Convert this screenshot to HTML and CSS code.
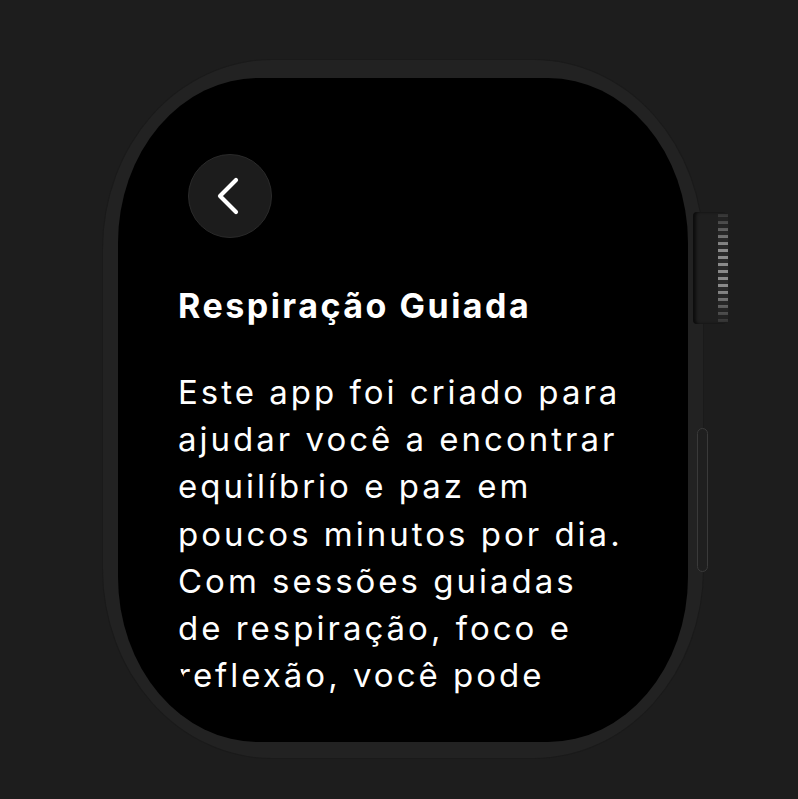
FILE: index.html
```html
<!DOCTYPE html>
<html lang="pt">
<head>
<meta charset="utf-8">
<title>Respiração Guiada</title>
<link rel="stylesheet" href="styles.css">
</head>
<body>
  <div class="watch">
    <div class="case">
      <div class="screen">
        <div class="scroll">
          <button class="back" aria-label="Voltar">
            <svg width="26" height="40" viewBox="0 0 26 40" aria-hidden="true">
              <path d="M21 4 L5 20 L21 36" fill="none" stroke="#fff" stroke-width="4.2" stroke-linecap="round" stroke-linejoin="round"/>
            </svg>
          </button>
          <h1 class="title">Respiração Guiada</h1>
          <p class="body">Este app foi criado para<br>ajudar você a encontrar<br>equilíbrio e paz em<br>poucos minutos por dia.<br>Com sessões guiadas<br>de respiração, foco e<br>reflexão, você pode<br>seguir mais leve e<br>tranquilo em seu dia.</p>
        </div>
      </div>
      <div class="crown"><div class="grooves"></div></div>
      <div class="side-button"></div>
    </div>
  </div>
</body>
</html>
```

FILE: styles.css
```css
html, body {
  margin: 0;
  padding: 0;
  background: #1d1d1d;
}
body {
  width: 798px;
  height: 799px;
  overflow: hidden;
  font-family: Inter, "Noto Sans", sans-serif;
  color: #fff;
}
.watch {
  padding: 59px 0 0 102px;
}
.case {
  position: relative;
  box-sizing: border-box;
  width: 602px;
  height: 700px;
  padding: 18px 15px 16px 15px;
  background: #222222;
  border: 1px solid #1a1a1a;
  border-radius: 170px / 190px;
}
.screen {
  box-sizing: border-box;
  height: 100%;
  background: #000;
  border-radius: 140px / 165px;
  padding: 0 0 34px 60px;
  display: flex;
  flex-direction: column;
}
.scroll {
  flex: 1;
  overflow: hidden;
  border-bottom-left-radius: 80px 50px;
}
.back {
  display: flex;
  align-items: center;
  justify-content: center;
  width: 84px;
  height: 84px;
  margin: 76px 0 0 10px;
  padding: 0 5px 0 0;
  border-radius: 50%;
  background: #1c1c1c;
  border: 1px solid #2b2b2b;
  box-sizing: border-box;
}
.title {
  margin: 50px 0 0 0;
  font-size: 34px;
  line-height: 36px;
  font-weight: 700;
  letter-spacing: 2.5px;
}
.body {
  margin: 45px 0 0 0;
  width: 500px;
  font-size: 33px;
  line-height: 47.2px;
  font-weight: 400;
  letter-spacing: 3px;
}
.crown {
  position: absolute;
  left: 590px;
  top: 152px;
  width: 36px;
  height: 112px;
  background: #1f1f1f;
  border-radius: 4px 8px 8px 4px;
  box-shadow: inset 3px 0 3px rgba(0,0,0,0.6);
  display: flex;
  justify-content: flex-end;
  padding: 2px 1px;
  box-sizing: border-box;
}
.grooves {
  width: 10px;
  height: 100%;
  background: repeating-linear-gradient(to bottom, #8a8a8a 0, #8a8a8a 3px, #2a2a2a 3px, #2a2a2a 7px);
  -webkit-mask-image: linear-gradient(to bottom, rgba(0,0,0,0.2), #000 30%, #000 70%, rgba(0,0,0,0.2));
  mask-image: linear-gradient(to bottom, rgba(0,0,0,0.2), #000 30%, #000 70%, rgba(0,0,0,0.2));
}
.side-button {
  position: absolute;
  left: 594px;
  top: 368px;
  width: 11px;
  height: 144px;
  box-sizing: border-box;
  border: 1.5px solid #3a3a3a;
  border-radius: 7px;
  background: #1f1f1f;
}
```
